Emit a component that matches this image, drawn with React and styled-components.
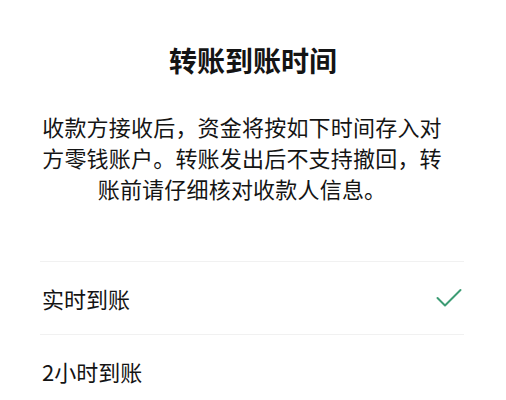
import styled, { createGlobalStyle } from "styled-components"

const Global = createGlobalStyle`
    body {
        margin: 0;
        background: #ffffff;
        font-family: "Noto Sans CJK SC", "Noto Sans", sans-serif;
        color: #141414;
    }
`

const Sheet = styled.div`
    width: 506px;
    height: 400px;
    overflow: hidden;
    background: #ffffff;
    padding: 40px 42px 0 40px;
    box-sizing: border-box;
`

const Title = styled.h2`
    margin: 0;
    font-size: 28px;
    line-height: 40px;
    font-weight: 700;
    text-align: center;
    padding-left: 2px;
`

const Desc = styled.p`
    margin: 31px 20px 0 0;
    font-size: 22px;
    line-height: 31px;
    letter-spacing: 0.2px;
    text-align: center;
`

const List = styled.div`
    margin-top: 57px;
`

const Row = styled.div`
    height: 72px;
    display: flex;
    align-items: center;
    justify-content: space-between;
    border-top: 1px solid #f1f1f1;
    padding: 0 2px;
    font-size: 22px;
`

const Check = () => (
    <svg width="26" height="20" viewBox="0 0 26 20" fill="none">
        <path d="M1.5 10 L9 17.5 L24.5 2" stroke="#3d9c74" strokeWidth="2" strokeLinecap="round" strokeLinejoin="round" />
    </svg>
)

const options = [
    { label: "实时到账", selected: true },
    { label: "2小时到账", selected: false },
]

const App = () => {
    return (
        <Sheet>
            <Global />
            <Title>转账到账时间</Title>
            <Desc>收款方接收后，资金将按如下时间存入对方零钱账户。转账发出后不支持撤回，转账前请仔细核对收款人信息。</Desc>
            <List>
                {options.map((o) => (
                    <Row key={o.label}>
                        <span>{o.label}</span>
                        {o.selected && <Check />}
                    </Row>
                ))}
            </List>
        </Sheet>
    )
}

export default App
